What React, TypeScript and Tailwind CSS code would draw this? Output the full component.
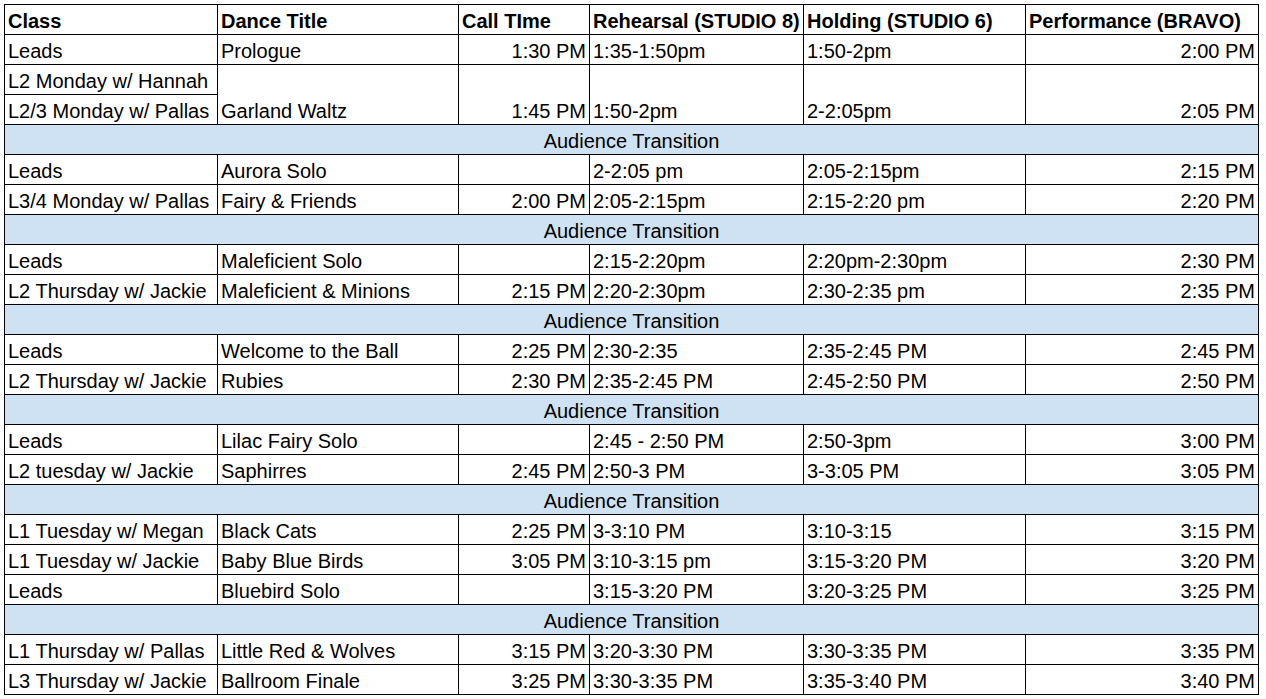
import React from "react";

type Row =
  | { kind: "t" }
  | { kind: "r"; c: string[] };

const rows: Row[] = [
  { kind: "r", c: ["Leads", "Prologue", "1:30 PM", "1:35-1:50pm", "1:50-2pm", "2:00 PM"] },
  { kind: "t" },
  { kind: "r", c: ["Leads", "Aurora Solo", "", "2-2:05 pm", "2:05-2:15pm", "2:15 PM"] },
  { kind: "r", c: ["L3/4 Monday w/ Pallas", "Fairy & Friends", "2:00 PM", "2:05-2:15pm", "2:15-2:20 pm", "2:20 PM"] },
  { kind: "t" },
  { kind: "r", c: ["Leads", "Maleficient Solo", "", "2:15-2:20pm", "2:20pm-2:30pm", "2:30 PM"] },
  { kind: "r", c: ["L2 Thursday w/ Jackie", "Maleficient & Minions", "2:15 PM", "2:20-2:30pm", "2:30-2:35 pm", "2:35 PM"] },
  { kind: "t" },
  { kind: "r", c: ["Leads", "Welcome to the Ball", "2:25 PM", "2:30-2:35", "2:35-2:45 PM", "2:45 PM"] },
  { kind: "r", c: ["L2 Thursday w/ Jackie", "Rubies", "2:30 PM", "2:35-2:45 PM", "2:45-2:50 PM", "2:50 PM"] },
  { kind: "t" },
  { kind: "r", c: ["Leads", "Lilac Fairy Solo", "", "2:45 - 2:50 PM", "2:50-3pm", "3:00 PM"] },
  { kind: "r", c: ["L2 tuesday w/ Jackie", "Saphirres", "2:45 PM", "2:50-3 PM", "3-3:05 PM", "3:05 PM"] },
  { kind: "t" },
  { kind: "r", c: ["L1 Tuesday w/ Megan", "Black Cats", "2:25 PM", "3-3:10 PM", "3:10-3:15", "3:15 PM"] },
  { kind: "r", c: ["L1 Tuesday w/ Jackie", "Baby Blue Birds", "3:05 PM", "3:10-3:15 pm", "3:15-3:20 PM", "3:20 PM"] },
  { kind: "r", c: ["Leads", "Bluebird Solo", "", "3:15-3:20 PM", "3:20-3:25 PM", "3:25 PM"] },
  { kind: "t" },
  { kind: "r", c: ["L1 Thursday w/ Pallas", "Little Red & Wolves", "3:15 PM", "3:20-3:30 PM", "3:30-3:35 PM", "3:35 PM"] },
  { kind: "r", c: ["L3 Thursday w/ Jackie", "Ballroom Finale", "3:25 PM", "3:30-3:35 PM", "3:35-3:40 PM", "3:40 PM"] },
];

const headers = ["Class", "Dance Title", "Call TIme", "Rehearsal (STUDIO 8)", "Holding (STUDIO 6)", "Performance (BRAVO)"];

function Cell({ text, right, bold, className = "" }: { text: string; right?: boolean; bold?: boolean; className?: string }) {
  return (
    <div
      className={`bg-white flex items-end px-[3px] pb-[1px] leading-[23px] text-[20px] whitespace-nowrap overflow-hidden text-black ${
        right ? "justify-end" : "justify-start"
      } ${bold ? "font-bold" : ""} ${className}`}
    >
      {text}
    </div>
  );
}

function RowCells({ c }: { c: string[] }) {
  return (
    <>
      {c.map((t, i) => (
        <Cell key={i} text={t} right={i === 2 || i === 5} />
      ))}
    </>
  );
}

export default function App() {
  const [first, ...rest] = rows;
  return (
    <div className="min-h-[699px] w-full bg-white pl-[4px] pt-[4px]" style={{ fontFamily: '"Liberation Sans", Arial, sans-serif' }}>
      <div className="grid w-fit grid-cols-[212px_240px_130px_213px_221px_232px] auto-rows-[29px] gap-px bg-black p-px">
        {headers.map((h, i) => (
          <Cell key={i} text={h} bold />
        ))}
        {first.kind === "r" && <RowCells c={first.c} />}
        {/* merged Garland Waltz rows */}
        <Cell text="L2 Monday w/ Hannah" className="col-start-1 row-start-3" />
        <Cell text="L2/3 Monday w/ Pallas" className="col-start-1 row-start-4" />
        <Cell text="Garland Waltz" className="col-start-2 row-start-3 row-span-2" />
        <Cell text="1:45 PM" right className="col-start-3 row-start-3 row-span-2" />
        <Cell text="1:50-2pm" className="col-start-4 row-start-3 row-span-2" />
        <Cell text="2-2:05pm" className="col-start-5 row-start-3 row-span-2" />
        <Cell text="2:05 PM" right className="col-start-6 row-start-3 row-span-2" />
        {rest.map((r, idx) =>
          r.kind === "t" ? (
            <div
              key={idx}
              className="col-span-6 bg-[#cfe2f3] flex items-end justify-center pb-[1px] leading-[23px] text-[20px] text-black whitespace-nowrap"
            >
              Audience Transition
            </div>
          ) : (
            <RowCells key={idx} c={r.c} />
          )
        )}
      </div>
    </div>
  );
}
